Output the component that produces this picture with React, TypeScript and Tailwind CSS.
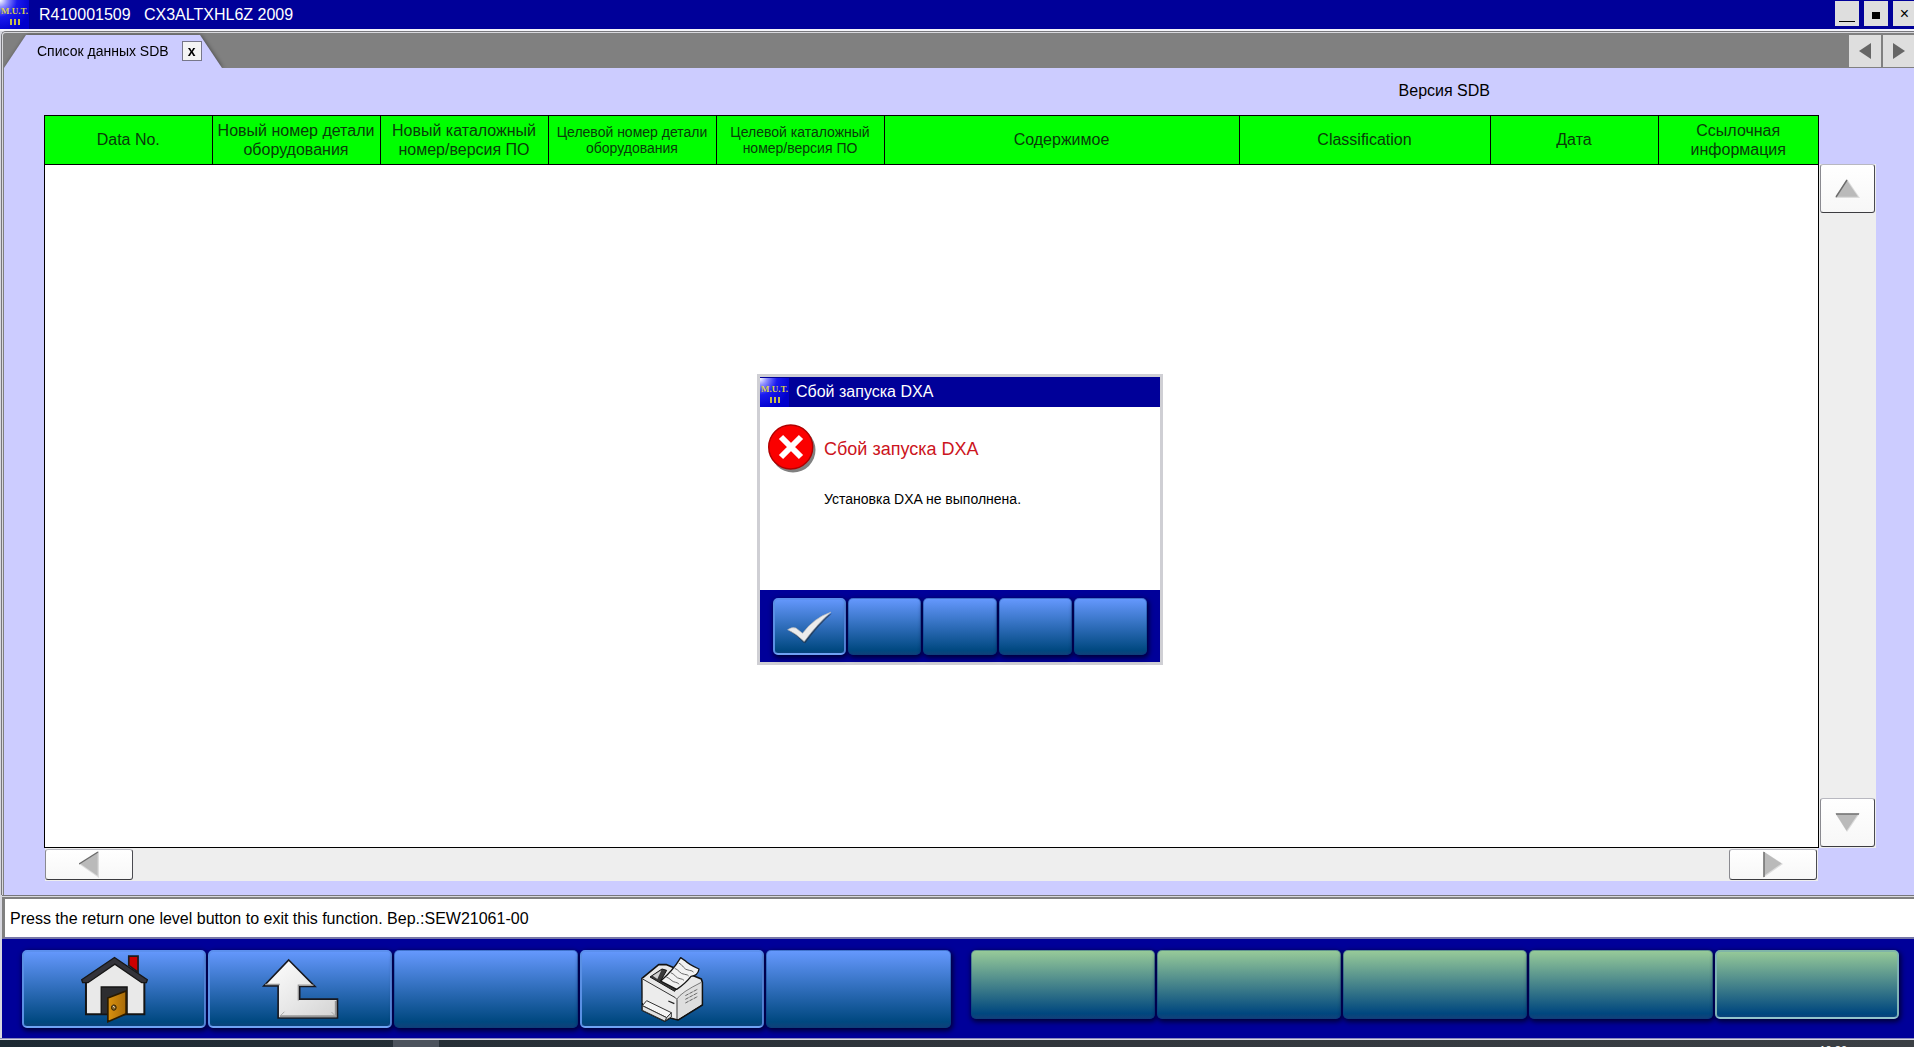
import React from "react";

type Column = { lines: string[]; width: string; small?: boolean };

const columns: Column[] = [
  { lines: ["Data No."], width: "w-[167px]" },
  { lines: ["Новый номер детали", "оборудования"], width: "w-[168px]" },
  { lines: ["Новый каталожный", "номер/версия ПО"], width: "w-[168px]" },
  { lines: ["Целевой номер детали", "оборудования"], width: "w-[168px]", small: true },
  { lines: ["Целевой каталожный", "номер/версия ПО"], width: "w-[168px]", small: true },
  { lines: ["Содержимое"], width: "w-[355px]" },
  { lines: ["Classification"], width: "w-[251px]" },
  { lines: ["Дата"], width: "w-[168px]" },
  { lines: ["Ссылочная", "информация"], width: "w-[160px]" },
];

function MutLogo() {
  return (
    <div className="flex h-[29px] w-[29px] shrink-0 flex-col items-center justify-end gap-[2px] bg-[radial-gradient(circle_at_0_0,#ffffff_0,#8f8fff_7px,#1a1aee_17px,#0000cc_32px)] pb-[4px] font-['Liberation_Serif',serif] text-[9px] leading-[12px] font-bold text-[#d8cf50]">
      <span>M.U.T.</span>
      <span className="flex h-[6px] gap-[2px]">
        <i className="w-[2px] bg-[#c8bd48]" />
        <i className="w-[2px] bg-[#c8bd48]" />
        <i className="w-[2px] bg-[#c8bd48]" />
      </span>
    </div>
  );
}

type Direction = "up" | "down" | "left" | "right";

const arrowShapes: Record<Direction, { box: string; size: string; fill: string; edge: string }> = {
  up: { box: "0 0 25 19", size: "h-[19px] w-[25px]", fill: "M12 0 25 19H0z", edge: "M12 1 1 18" },
  down: { box: "0 0 25 19", size: "h-[19px] w-[25px]", fill: "M0 0H25L12 19z", edge: "M1 1H24" },
  left: { box: "0 0 20 27", size: "h-[27px] w-[20px]", fill: "M0 13 20 0V27z", edge: "M0 13 19 1" },
  right: { box: "0 0 20 27", size: "h-[27px] w-[20px]", fill: "M0 0 20 13 0 27z", edge: "M1 1V26" },
};

function ScrollButton({ direction, className }: { direction: Direction; className: string }) {
  const a = arrowShapes[direction];
  return (
    <button
      type="button"
      aria-label={"Scroll " + direction}
      className={
        "flex shrink-0 items-center justify-center rounded-[3px] border border-t-[#b8b8c0] border-r-[#4a4a50] border-b-[#3c3c40] border-l-[#8a8a90] bg-gradient-to-b from-white to-[#f7f7f7] " +
        className
      }
    >
      <svg viewBox={a.box} className={a.size}>
        <path d={a.fill} fill="#dcdcdc" />
        <path d={a.fill} fill="#bababa" transform="translate(1 1) scale(.88)" />
        <path d={a.edge} stroke="#6c6c6c" strokeWidth="1.4" fill="none" />
      </svg>
    </button>
  );
}

function ToolButton({
  label,
  green = false,
  active = false,
  children,
}: {
  label: string;
  green?: boolean;
  active?: boolean;
  children?: React.ReactNode;
}) {
  const tone = green
    ? "bg-[linear-gradient(#99cc99,#00477f_92%,#144078)]"
    : "bg-[linear-gradient(#6699ff,#004880_92%,#104078)]";
  const edge = active
    ? green
      ? "border-2 border-t-[#7fb4a8] border-x-[#7fb4b4] border-b-[#93c4cc]"
      : "border-2 border-t-[#5c90ee] border-x-[#5a90e4] border-b-[#6fa2f4]"
    : "border border-[#0a3a80]/40";
  return (
    <button
      type="button"
      aria-label={label}
      className={
        "flex h-full w-full items-center justify-center rounded-[5px] bg-origin-border shadow-[1px_2px_5px_1px_#000038] " + tone + " " + edge
      }
    >
      {children}
    </button>
  );
}

function HomeIcon() {
  return (
    <svg viewBox="238 526 208 210" className="h-[70px] w-[69px]">
      <defs>
        <linearGradient id="door" x1="0" x2="1">
          <stop offset="0" stopColor="#d9920f" />
          <stop offset="1" stopColor="#a86a08" />
        </linearGradient>
      </defs>
      <path d="M385 532H413V580L385 560z" fill="#cc0000" stroke="#1c1c1c" strokeWidth="5" />
      <path d="M256 600 342 546 432 602V707H256z" fill="#e9e9e9" stroke="#141414" strokeWidth="6" />
      <path d="M342 536 441 603 438 612H424L343 556 262 612H246L243 603z" fill="#33333a" stroke="#161616" strokeWidth="4" />
      <path d="M302 707V625H380V707z" fill="#2d2d30" stroke="#141414" strokeWidth="4" />
      <path d="M322 658 377 637V706L322 730z" fill="url(#door)" stroke="#2a1a00" strokeWidth="5" />
      <ellipse cx="340" cy="687" rx="7" ry="8" fill="#8b6a2a" stroke="#2a1a00" strokeWidth="3" />
      <path d="M337 682 343 687" stroke="#ddd" strokeWidth="3" />
    </svg>
  );
}

function ReturnIcon() {
  return (
    <svg viewBox="780 532 237 187" className="h-[62px] w-[79px]">
      <defs>
        <linearGradient id="ret" x1="0" y1="0" x2="1" y2="1">
          <stop offset="0" stopColor="#ffffff" />
          <stop offset=".6" stopColor="#e6e6e6" />
          <stop offset="1" stopColor="#d2d2d2" />
        </linearGradient>
      </defs>
      <path d="M863 538 942 618H896V656H1010V713H831V616H788z" fill="url(#ret)" stroke="#17181f" strokeWidth="5" strokeLinejoin="miter" />
      <path d="M792 612H836M938 614H892V660" stroke="#999" strokeWidth="4" fill="none" />
      <path d="M836 708H1005V662" stroke="#777" strokeWidth="6" fill="none" opacity=".7" />
      <path d="M838 706 850 694M1004 707 992 695" stroke="#aaa" strokeWidth="3" />
    </svg>
  );
}

function PrinterIcon() {
  return (
    <svg viewBox="42 17 192 198" className="h-[66px] w-[64px]" strokeLinejoin="round">
      <path d="M48 84 98 43H122L226 86 229 96V164L156 209 132 203 116 212 49 180z" fill="#e8e8e8" stroke="#111" strokeWidth="5" />
      <path d="M50 84 154 142V206L50 158z" fill="#ececec" />
      <path d="M154 142Q170 128 226 94V162L156 206z" fill="#dedede" />
      <path d="M50 86 148 142Q150 144 153 148V206" fill="none" stroke="#333" strokeWidth="3" />
      <path d="M153 146Q165 126 226 96" fill="none" stroke="#444" strokeWidth="2" />
      <path d="M72 80 108 56 122 60 104 92 150 116 146 123z" fill="#3a3a3a" stroke="#151515" strokeWidth="3" />
      <path d="M80 76 106 60 94 86z" fill="#cfcfcf" />
      <path d="M104 92Q140 62 164 22L176 30Q190 44 219 56Q216 76 195 78Q180 98 152 117z" fill="#f2f2f2" stroke="#151515" strokeWidth="4" />
      <path d="M158 38q8 3 14 12t18 10 12 6M146 54q8 3 14 10t16 8 12 5M134 67q8 3 14 10t14 8 12 5M121 80q8 3 14 9t14 7 10 6" fill="none" stroke="#6a6a6a" strokeWidth="3" />
      <path d="M127 152 145 160" stroke="#222" strokeWidth="4" />
      <path d="M178 136 216 116M178 147 216 127M178 158 216 138" stroke="#666" strokeWidth="3" strokeDasharray="11 3" />
      <path d="M49 166 62 151 136 187 122 202z" fill="#f4f4f4" stroke="#333" strokeWidth="3" />
      <path d="M49 166V180L116 212 136 200V187L122 202z" fill="#e2e2e2" stroke="#333" strokeWidth="3" />
      <path d="M122 202 117 211" stroke="#333" strokeWidth="3" />
    </svg>
  );
}

function CheckIcon() {
  return (
    <svg viewBox="108 736 142 102" className="h-[34px] w-[47px]">
      <path d="M115 796Q126 788 138 791L158 808Q192 762 245 743Q206 776 164 833L158 831Q138 808 115 796z" fill="#222b3a" opacity=".6" transform="translate(2 3)" />
      <path d="M113 795Q126 786 138 790L158 806Q192 760 244 742Q204 776 163 831Q138 806 113 795z" fill="#ececec" stroke="#b8b8b8" strokeWidth="2" />
    </svg>
  );
}

function ErrorIcon() {
  return (
    <svg viewBox="0 0 48 49" className="h-[49px] w-[48px] shrink-0">
      <circle cx="25" cy="26" r="22.5" fill="#808080" />
      <circle cx="22.7" cy="23" r="22" fill="#fb0000" stroke="#b00000" strokeWidth="1.4" />
      <path d="M13 13 33 33M33 13 13 33" stroke="#fff" strokeWidth="6" />
    </svg>
  );
}

function ErrorDialog() {
  return (
    <section
      role="dialog"
      aria-labelledby="dialog-title"
      className="flex w-[406px] flex-col border-[3px] border-[#cfcfd4] bg-white"
    >
      <header className="flex h-[30px] items-center bg-[#000099] text-white">
        <MutLogo />
        <h2 id="dialog-title" className="ml-[7px] text-base leading-[30px]">
          Сбой запуска DXA
        </h2>
      </header>
      <div className="h-[183px] px-2 pt-[17px]">
        <div className="flex items-center gap-2">
          <ErrorIcon />
          <p className="text-[18px] leading-6 text-[#cc1420]">Сбой запуска DXA</p>
        </div>
        <p className="mt-4 ml-14 text-[14px] leading-5">Установка DXA не выполнена.</p>
      </div>
      <footer className="grid h-[72px] grid-cols-5 gap-[2px] bg-[#000099] px-[13px] pt-2 pb-[7px]">
        <ToolButton label="OK" active>
          <CheckIcon />
        </ToolButton>
        <ToolButton label="F2" />
        <ToolButton label="F3" />
        <ToolButton label="F4" />
        <ToolButton label="F5" />
      </footer>
    </section>
  );
}

function NavButton({ label, path }: { label: string; path: string }) {
  return (
    <button type="button" aria-label={label} className="flex h-8 w-8 items-center justify-center bg-[#dedede]">
      <svg viewBox="0 0 12 16" className="h-4 w-3">
        <path d={path} fill="#666" />
      </svg>
    </button>
  );
}

export default function App() {
  return (
    <div className="relative flex min-h-screen flex-col overflow-hidden bg-[#d8d8e0] font-['Liberation_Sans',Arial,sans-serif] text-base text-black">
      <header className="flex h-[29px] items-start bg-[#000099] text-white">
        <MutLogo />
        <h1 className="ml-[10px] leading-[29px] whitespace-pre">R410001509{"   "}CX3ALTXHL6Z 2009</h1>
        <div className="ml-auto flex gap-[5px] pt-px text-black">
          <button type="button" aria-label="Minimize" className="flex h-[25px] w-6 items-end justify-center bg-[#dedede] pb-1">
            <span className="h-px w-4 bg-black" />
          </button>
          <button type="button" aria-label="Maximize" className="flex h-[25px] w-6 items-center justify-center bg-[#dedede] pt-1">
            <span className="h-[7px] w-2 bg-black" />
          </button>
          <button type="button" aria-label="Close" className="h-[25px] w-[21px] bg-[#dedede] pl-0.5 text-base leading-6">
            ×
          </button>
        </div>
      </header>

      <div className="h-[2px] bg-[#f4f4fa]" />

      <main className="ml-px flex flex-1 flex-col rounded-tl-[5px] border-t border-l border-[#77777c]">
        <div className="flex flex-1 flex-col rounded-tl-[4px] border-t border-l border-[#d8d8dc]">
          <div className="flex flex-1 flex-col rounded-tl-[3px] border-l border-[#808080] bg-[#808080]">
            <div className="flex h-[35px] items-end justify-between">
              <div className="drop-shadow-[1px_0_2px_rgba(0,0,0,0.4)]">
                <div className="flex h-[33px] w-[218px] items-center bg-[#ccccff] pb-px pl-[33px] text-[14px] [clip-path:polygon(0_100%,22px_0,196px_0,100%_100%)]">
                  <span>Список данных SDB</span>
                  <button
                    type="button"
                    aria-label="Close tab"
                    className="ml-[13px] h-5 w-5 border border-[#77778a] bg-[#f4f4f4] text-[14px] leading-4 font-bold"
                  >
                    x
                  </button>
                </div>
              </div>
              <div className="-mr-px flex gap-[2px] pb-px">
                <NavButton label="Previous tab" path="M0 8 12 0V16z" />
                <NavButton label="Next tab" path="M0 0 12 8 0 16z" />
              </div>
            </div>

            <div className="relative flex flex-1 flex-col bg-[#ccccff] pr-[38px] pb-[14px] pl-10">
              <div className="grid h-[47px] grid-cols-[1446fr_328fr_58px]">
                <p className="pt-[11px] text-right leading-6">Версия SDB</p>
              </div>
              <div className="flex flex-1">
                <div className="flex-1 border border-black bg-white">
                  <table className="w-full table-fixed border-collapse">
                    <thead>
                      <tr className="h-12 border-b border-black bg-[#00ff00] text-[#0a3a0a]">
                        {columns.map((c, i) => (
                          <th
                            key={i}
                            scope="col"
                            className={
                              "border-l border-black p-0 text-center font-normal whitespace-nowrap first:border-l-0 " +
                              c.width +
                              (c.small ? " text-[14px] leading-4" : " text-base leading-[19px]")
                            }
                          >
                            {c.lines.map((line) => (
                              <span key={line} className="block">
                                {line}
                              </span>
                            ))}
                          </th>
                        ))}
                      </tr>
                    </thead>
                    <tbody />
                  </table>
                </div>
                <div className="flex w-[58px] flex-col pt-[49px]">
                  <div className="flex flex-1 flex-col justify-between bg-[#eeeeee] px-px pb-px">
                    <ScrollButton direction="up" className="h-[49px] w-full" />
                    <ScrollButton direction="down" className="h-[49px] w-full" />
                  </div>
                </div>
              </div>
              <div className="mr-[58px] ml-px flex h-[33px] items-start justify-between bg-[#eeeeee] pt-px pr-px">
                <ScrollButton direction="left" className="h-[31px] w-[88px]" />
                <ScrollButton direction="right" className="h-[31px] w-[88px]" />
              </div>
            </div>
          </div>
        </div>
      </main>

      <div className="ml-[2px] h-[2px] border-t border-[#77777c] bg-[#d8d8dc]" />
      <div className="ml-[2px] h-[42px] border-t-2 border-b-2 border-l-[3px] border-t-[#808080] border-b-[#7777a8] border-l-[#808080] bg-white">
        <p className="pt-px pl-[5px] leading-[38px]">Press the return one level button to exit this function. Вер.:SEW21061-00</p>
      </div>

      <footer className="ml-[2px] grid h-[99px] grid-cols-2 gap-[20px] bg-[#000099] pt-[11px] pr-[15px] pl-5">
        <div className="grid h-[78px] grid-cols-5 gap-[2px]">
          <ToolButton label="Home" active>
            <HomeIcon />
          </ToolButton>
          <ToolButton label="Return one level" active>
            <ReturnIcon />
          </ToolButton>
          <ToolButton label="F3" />
          <ToolButton label="Print" active>
            <PrinterIcon />
          </ToolButton>
          <ToolButton label="F5" />
        </div>
        <div className="grid h-[69px] grid-cols-5 gap-[2px]">
          <ToolButton label="F6" green />
          <ToolButton label="F7" green />
          <ToolButton label="F8" green />
          <ToolButton label="F9" green />
          <ToolButton label="F10" green active />
        </div>
      </footer>

      <div className="h-[2px] border-t border-[#8888bb] bg-[#d8d8e4]" />
      <div className="flex h-[7px] items-start justify-between overflow-hidden bg-gradient-to-r from-[#1d2a33] via-[#30353b] to-[#3b4045] pr-[67px] pl-[393px] text-white">
        <span className="h-[7px] w-[46px] bg-[#4c535d]" />
        <time className="pt-[3px] text-[11px] leading-[14px]">10:20</time>
      </div>

      <div className="absolute inset-0 flex items-center justify-center pb-2 pl-[6px]">
        <ErrorDialog />
      </div>
    </div>
  );
}
